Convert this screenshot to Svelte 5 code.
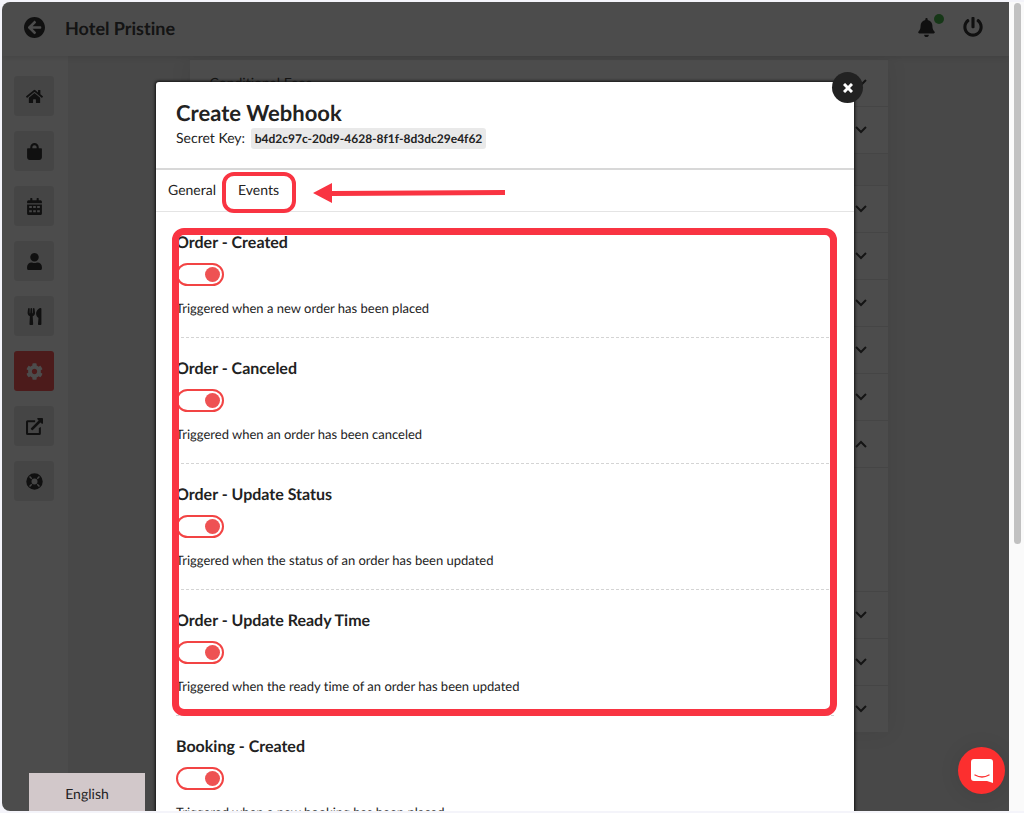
<script>
	const nav = [
		{
			name: 'Home',
			box: '0 0 576 512',
			d: 'M280.37 148.26L96 300.11V464a16 16 0 0 0 16 16l112.06-.29a16 16 0 0 0 15.92-16V368a16 16 0 0 1 16-16h64a16 16 0 0 1 16 16v95.64a16 16 0 0 0 16 16.05L464 480a16 16 0 0 0 16-16V300L295.67 148.26a12.19 12.19 0 0 0-15.3 0zM571.6 251.47L488 182.56V44.05a12 12 0 0 0-12-12h-56a12 12 0 0 0-12 12v72.61L318.47 43a48 48 0 0 0-61 0L4.34 251.47a12 12 0 0 0-1.6 16.9l25.5 31A12 12 0 0 0 45.15 301l235.22-193.74a12.19 12.19 0 0 1 15.3 0L530.9 301a12 12 0 0 0 16.9-1.6l25.5-31a12 12 0 0 0-1.7-16.93z',
		},
		{
			name: 'Orders',
			box: '0 0 448 512',
			d: 'M352 160v-32C352 57.42 294.579 0 224 0 153.42 0 96 57.42 96 128v32H24a24 24 0 0 0-24 24v248c0 44.183 35.817 80 80 80h288c44.183 0 80-35.817 80-80V184a24 24 0 0 0-24-24h-72zm-192-32c0-35.29 28.71-64 64-64s64 28.71 64 64v32H160v-32z',
		},
		{
			name: 'Bookings',
			box: '0 0 448 512',
			d: 'M0 464c0 26.500 21.500 48 48 48h352c26.500 0 48-21.500 48-48V192H0zM64 240h80v64H64zM184 240h80v64h-80zM304 240h80v64h-80zM64 368h80v64H64zM184 368h80v64h-80zM304 368h80v64h-80zM400 64h-48V16q0-16-16-16h-32q-16 0-16 16v48H160V16q0-16-16-16h-32q-16 0-16 16v48H48c-26.500 0-48 21.500-48 48v48h448v-48c0-26.500-21.500-48-48-48z',
		},
		{
			name: 'Customers',
			box: '0 0 448 512',
			d: 'M224 256c70.7 0 128-57.3 128-128S294.7 0 224 0 96 57.3 96 128s57.3 128 128 128zm89.6 32h-16.7c-22.2 10.2-46.9 16-72.9 16s-50.6-5.8-72.9-16h-16.7C60.2 288 0 348.2 0 422.4V464c0 26.5 21.5 48 48 48h352c26.5 0 48-21.5 48-48v-41.6c0-74.2-60.2-134.4-134.4-134.4z',
		},
		{
			name: 'Menus',
			box: '0 0 416 512',
			d: 'M207.9 15.2c.8 4.7 16.1 94.5 16.1 128.8 0 52.3-27.8 89.6-68.9 104.6L168 486.7c.7 13.7-10.2 25.3-24 25.3H80c-13.7 0-24.7-11.5-24-25.3l12.9-238.1C27.7 233.6 0 196.2 0 144 0 109.6 15.3 19.9 16.1 15.2 19.3-5.1 61.4-5.4 64 16.3v141.2c1.3 3.4 15.1 3.2 16 0 1.4-25.3 7.9-139.2 8-141.8 3.3-20.8 44.7-20.8 47.9 0 .2 2.7 6.6 116.5 8 141.8.9 3.2 14.8 3.4 16 0V16.3c2.6-21.6 44.8-21.4 47.9-1.1zm119.2 285.7l-15 185.1c-1.2 14 9.9 26 23.9 26h56c13.3 0 24-10.7 24-24V24c0-13.2-10.7-24-24-24-82.5 0-221.4 178.5-64.9 300.9z',
		},
		{
			name: 'Settings',
			active: true,
			box: '0 0 512 512',
			d: 'M487.4 315.7l-42.6-24.6c4.3-23.2 4.3-47 0-70.2l42.6-24.6c4.9-2.8 7.1-8.6 5.5-14-11.1-35.6-30-67.8-54.7-94.6-3.8-4.1-10-5.1-14.8-2.3L380.8 110c-17.9-15.4-38.5-27.3-60.8-35.1V25.8c0-5.6-3.9-10.5-9.4-11.7-36.7-8.2-74.3-7.8-109.2 0-5.5 1.2-9.4 6.1-9.4 11.7V75c-22.2 7.9-42.8 19.8-60.8 35.1L88.7 85.5c-4.9-2.8-11-1.9-14.8 2.3-24.7 26.7-43.6 58.9-54.7 94.6-1.7 5.4.6 11.2 5.5 14L67.3 221c-4.3 23.2-4.3 47 0 70.2l-42.6 24.6c-4.9 2.8-7.1 8.6-5.5 14 11.1 35.6 30 67.8 54.7 94.6 3.8 4.1 10 5.1 14.8 2.3l42.6-24.6c17.9 15.4 38.5 27.3 60.8 35.1v49.2c0 5.6 3.9 10.5 9.4 11.7 36.7 8.2 74.3 7.8 109.2 0 5.5-1.2 9.4-6.1 9.4-11.7v-49.2c22.2-7.9 42.8-19.8 60.8-35.1l42.6 24.6c4.9 2.8 11 1.9 14.8-2.3 24.7-26.7 43.6-58.9 54.7-94.6 1.5-5.5-.7-11.3-5.6-14.1zM256 336c-44.1 0-80-35.9-80-80s35.9-80 80-80 80 35.9 80 80-35.9 80-80 80z',
		},
		{
			name: 'Open site',
			box: '0 0 512 512',
			d: 'M0 110q0-46 46-46h230v62H62v324h324V300l62-30v196q0 46-46 46H46q-46 0-46-46zM352 0h136q24 0 24 24v136q-8 24-36 10l-40-38-230 230q-16 14-32 0l-24-24q-14-16 0-32l230-230-38-38q-16-24 10-38z',
		},
		{
			name: 'Support',
			box: '0 0 512 512',
			d: 'M256 8a248 248 0 1 0 0 496 248 248 0 1 0 0-496zM256 166a90 90 0 1 1 0 180 90 90 0 1 1 0-180zM122 92l66 66-30 30-66-66zM390 92l-66 66 30 30 66-66zM122 420l66-66-30-30-66 66zM390 420l-66-66 30-30 66 66z',
		},
	]

	const rows = [
		{ title: 'Conditional Fees' },
		{},
		{ type: 'gap' },
		{},
		{},
		{},
		{},
		{},
		{ open: true },
		{ type: 'body' },
		{},
		{},
		{},
	]

	const orderEvents = [
		{ id: 'order-created', title: 'Order - Created', text: 'Triggered when a new order has been placed' },
		{ id: 'order-canceled', title: 'Order - Canceled', text: 'Triggered when an order has been canceled' },
		{ id: 'order-status', title: 'Order - Update Status', text: 'Triggered when the status of an order has been updated' },
		{ id: 'order-ready', title: 'Order - Update Ready Time', text: 'Triggered when the ready time of an order has been updated' },
	]

	const bookingEvents = [
		{ id: 'booking-created', title: 'Booking - Created', text: 'Triggered when a new booking has been placed' },
	]

	let enabled = $state({
		'order-created': true,
		'order-canceled': true,
		'order-status': true,
		'order-ready': true,
		'booking-created': true,
	})
</script>

{#snippet eventItem(event)}
	<div class="event">
		<label for={event.id}>{event.title}</label>
		<input id={event.id} class="toggle" type="checkbox" bind:checked={enabled[event.id]}>
		<p>{event.text}</p>
	</div>
{/snippet}

<div class="page">
	<div class="app">
		<header class="topbar">
			<button class="icon-btn" aria-label="Back">
				<svg width="21" height="21" viewBox="8 8 496 496"><path d="M256 504C119 504 8 393 8 256S119 8 256 8s248 111 248 248-111 248-248 248zm28.9-143.6L209.4 288H392c13.3 0 24-10.7 24-24v-16c0-13.3-10.7-24-24-24H209.4l75.5-72.4c9.7-9.3 9.9-24.8.4-34.3l-11-10.9c-9.4-9.4-24.6-9.4-33.9 0L107.7 239c-9.4 9.4-9.4 24.6 0 33.9l132.7 132.7c9.4 9.4 24.6 9.4 33.9 0l11-10.9c9.5-9.5 9.3-25-.4-34.3z"/></svg>
			</button>
			<h1>Hotel Pristine</h1>
			<button class="icon-btn bell" aria-label="Notifications">
				<svg width="17" height="19" viewBox="0 0 448 512"><path d="M224 512c35.32 0 63.97-28.65 63.97-64H160.03c0 35.35 28.65 64 63.97 64zm215.39-149.71c-19.32-20.76-55.47-51.99-55.47-154.29 0-77.7-54.48-139.9-127.94-155.16V32c0-17.67-14.32-32-31.98-32s-31.98 14.33-31.98 32v20.84C118.56 68.1 64.08 130.3 64.08 208c0 102.3-36.15 133.53-55.47 154.29-6 6.45-8.66 14.16-8.61 21.71.11 16.4 12.98 32 32.1 32h383.8c19.12 0 32-15.6 32.1-32 .05-7.55-2.61-15.27-8.61-21.71z"/></svg>
				<span class="dot"></span>
			</button>
			<button class="icon-btn" aria-label="Log out">
				<svg width="20" height="20" viewBox="0 0 512 512"><path d="M400 54.1c63 45 104 118.6 104 201.9 0 136.8-110.8 247.7-247.5 248C120 504.3 8.2 393 8 256.4 7.9 173.1 48.9 99.3 111.8 54.2c11.7-8.3 28-4.8 35 7.7L162.6 90c5.9 10.5 3.1 23.8-6.6 31-41.5 30.8-68 79.6-68 134.9-.1 92.3 74.5 168.1 168 168.1 91.6 0 168.6-74.2 168-169.1-.3-51.8-24.7-101.8-68.1-134-9.7-7.2-12.4-20.5-6.5-30.9l15.8-28.1c7-12.4 23.2-16.1 34.8-7.8zM296 264V24c0-13.3-10.7-24-24-24h-32c-13.3 0-24 10.7-24 24v240c0 13.3 10.7 24 24 24h32c13.3 0 24-10.7 24-24z"/></svg>
			</button>
		</header>

		<div class="main">
			<nav>
				{#each nav as item}
					<a href="#{item.name}" class:active={item.active} aria-label={item.name}>
						<svg width="17" height="17" viewBox={item.box}><path fill-rule="evenodd" d={item.d}/></svg>
					</a>
				{/each}
			</nav>
			<div class="content">
				<div class="card">
					{#each rows as row}
						{#if row.type}
							<div class={row.type}></div>
						{:else}
							<button class="row" aria-label={row.title ?? 'Section'}>
								<span>{row.title ?? ''}</span>
								<svg width="12" height="8" viewBox="0 0 12 8"><path class="line" d={row.open ? 'M1 7l5-5 5 5' : 'M1 1l5 5 5-5'}/></svg>
							</button>
						{/if}
					{/each}
				</div>
			</div>
		</div>

		<div class="overlay">
			<div class="modal" role="dialog" aria-labelledby="modal-title">
				<button class="close" aria-label="Close">
					<svg width="10" height="10" viewBox="0 0 10 10"><path d="M1 1l8 8M9 1l-8 8"/></svg>
				</button>
				<div class="head">
					<h2 id="modal-title">Create Webhook</h2>
					<div class="secret">Secret Key: <code>b4d2c97c-20d9-4628-8f1f-8d3dc29e4f62</code></div>
				</div>
				<div class="tabs">
					<button class="tab">General</button>
					<button class="tab marked">Events</button>
					<svg class="arrow" width="192" height="20" viewBox="0 0 192 20"><path d="M0 10L19 0v8L192 7v5L19 13v7z"/></svg>
				</div>
				<div class="events">
					<div class="group">
						{#each orderEvents as event}
							{@render eventItem(event)}
						{/each}
					</div>
					{#each bookingEvents as event}
						{@render eventItem(event)}
					{/each}
				</div>
			</div>
		</div>

		<button class="language">English</button>
		<button class="chat" aria-label="Open chat">
			<svg width="22" height="24" viewBox="0 0 22 24"><path fill="#fff" d="M3 0h16q3 0 3 3v21l-6-2H3q-3 0-3-3V3q0-3 3-3z"/><path fill="none" stroke="#fc2f2f" stroke-width="1.400" stroke-linecap="round" d="M4 16q7 4 14 0"/></svg>
		</button>
	</div>
	<div class="scrollbar"><div class="thumb"></div></div>
</div>

<style>
:global(body) {
	margin: 0;
	background: #f4f4fa;
}

.page {
	display: flex;
	height: 100vh;
	box-sizing: border-box;
	padding: 2px 0;
	padding-left: 2px;
	overflow: hidden;
	font-family: Lato, "Open Sans", sans-serif;
	font-size: 14px;
	line-height: 20px;
	font-variant-ligatures: none;
	text-rendering: geometricPrecision;
	color: #222;
}

button {
	border: 0;
	padding: 0;
	background: none;
	font: inherit;
	color: inherit;
	text-rendering: inherit;
	cursor: pointer;
}

svg {
	display: block;
	fill: #383838;
}

h1, h2, p {
	margin: 0;
}

.app {
	position: relative;
	flex: 1;
	display: flex;
	flex-direction: column;
	overflow: hidden;
	border-radius: 8px 0 0 8px;
	background: #f0f0f0;
}

.topbar {
	display: flex;
	align-items: center;
	flex-shrink: 0;
	height: 54px;
	box-sizing: border-box;
	padding: 0 26px 4px 22px;
	background: #fff;
	box-shadow: 0 1px 6px rgba(0, 0, 0, 0.12);
	z-index: 1;
}

h1 {
	flex: 1;
	margin-left: 20px;
	padding-top: 2px;
	font-size: 18px;
	line-height: 22px;
	color: #444;
}

.bell {
	position: relative;
	margin-right: 28px;
}

.dot {
	position: absolute;
	top: -4px;
	right: -9px;
	width: 10px;
	height: 10px;
	border-radius: 50%;
	background: #4bb84f;
}

.main {
	flex: 1;
	display: flex;
	min-height: 0;
}

nav {
	display: flex;
	flex-direction: column;
	gap: 15px;
	width: 66px;
	box-sizing: border-box;
	padding: 20px 12px;
	background: #fff;
}

nav a {
	display: flex;
	align-items: center;
	justify-content: center;
	width: 40px;
	height: 40px;
	border-radius: 3px;
	background: #e8e8e8;
}

nav a.active {
	background: #ff5a5a;
}

nav a.active svg {
	fill: #fff;
}

.content {
	flex: 1;
}

.card {
	max-width: 698px;
	margin: 3px auto 0;
	background: #fff;
	box-shadow: 0 0 20px rgba(0, 0, 0, 0.08);
}

.row {
	display: flex;
	align-items: center;
	justify-content: space-between;
	width: 100%;
	height: 47px;
	box-sizing: border-box;
	padding: 0 21px 0 20px;
	border-top: 1px solid #e8e8e8;
	color: #444;
}

.gap {
	height: 32px;
	border-top: 1px solid #e8e8e8;
	box-sizing: border-box;
	background: #f8f8f8;
}

.body {
	height: 123px;
	border-top: 1px solid #e8e8e8;
}

.line {
	fill: none;
	stroke: #444;
	stroke-width: 2;
}

.overlay {
	position: absolute;
	inset: 0;
	display: flex;
	justify-content: center;
	align-items: flex-start;
	padding: 80px 21px 0 20px;
	z-index: 2;
	background: rgba(0, 0, 0, 0.7);
}

.modal {
	position: relative;
	width: 100%;
	max-width: 698px;
	border-radius: 3px;
	background: #fff;
	box-shadow: 0 0 3px 1px #111;
}

.close {
	position: absolute;
	top: -10px;
	right: -9px;
	display: flex;
	align-items: center;
	justify-content: center;
	width: 31px;
	height: 31px;
	border-radius: 50%;
	background: #222;
}

.close path {
	stroke: #fff;
	stroke-width: 3;
}

.head {
	padding: 18px 20px 19px;
	border-bottom: 2px solid #d8d8d8;
}

h2 {
	font-size: 22px;
	line-height: 26px;
}

.secret {
	line-height: 23px;
}

code {
	display: inline-block;
	margin-left: 2px;
	padding: 0 4px;
	border-radius: 3px;
	background: #e9e9e9;
	font-family: inherit;
	font-size: 12px;
	font-weight: bold;
	line-height: 21px;
}

.tabs {
	display: flex;
	align-items: center;
	height: 42px;
	box-sizing: border-box;
	padding: 0 12px 2px;
	border-bottom: 1px solid #e4e4e4;
}

.tab {
	position: relative;
	margin-right: 22px;
}

.marked::after {
	content: "";
	position: absolute;
	inset: -8px -17px -13px -16px;
	border: 4px solid #f93442;
	border-radius: 12px;
}

.arrow {
	margin: 7px 0 0 12px;
	fill: #f93442;
}

.events {
	padding: 0 20px;
}

.group {
	position: relative;
}

.group::after {
	content: "";
	position: absolute;
	inset: 16px -3px 0 -4px;
	border: 7px solid #f93442;
	border-radius: 12px;
	pointer-events: none;
}

.event {
	display: flex;
	flex-direction: column;
	align-items: flex-start;
	box-sizing: border-box;
	height: 126px;
	padding-top: 21px;
	border-bottom: 1px dashed #d4d4d4;
}

.event label {
	font-size: 16px;
	font-weight: bold;
}

.event p {
	margin-top: 12px;
	font-size: 13px;
}

.toggle {
	appearance: none;
	display: flex;
	align-items: center;
	width: 48px;
	height: 23px;
	box-sizing: border-box;
	margin: 10px 0 0;
	padding: 0 2px;
	border: 2px solid #f24444;
	border-radius: 12px;
	background: #fff;
	cursor: pointer;
}

.toggle::before {
	content: "";
	width: 15px;
	height: 15px;
	border-radius: 50%;
	background: #ee5253;
}

.toggle:checked {
	justify-content: flex-end;
}

.language {
	position: absolute;
	left: 27px;
	bottom: 0;
	z-index: 3;
	width: 116px;
	height: 38px;
	padding-top: 4px;
	background: #d2c8ca;
}

.chat {
	position: absolute;
	right: 4px;
	bottom: 17px;
	z-index: 3;
	display: flex;
	align-items: center;
	justify-content: center;
	width: 47px;
	height: 47px;
	border-radius: 50%;
	background: #fc2f2f;
	box-shadow: 0 1px 20px rgba(0, 0, 0, 0.1);
}

.scrollbar {
	width: 15px;
	box-sizing: border-box;
	padding: 1px 3px 0 5px;
	background: #fafafa;
}

.thumb {
	height: 67%;
	border-radius: 4px;
	background: #c1c1c1;
}
</style>
